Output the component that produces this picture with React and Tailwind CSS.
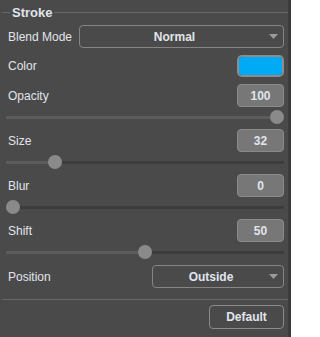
import React from "react";

const Arrow = () => (
    <svg width="9" height="5" viewBox="0 0 9 5" className="shrink-0 mr-[5px]">
        <path d="M0 0 H9 L4.5 5 Z" fill="#9a9a9a" />
    </svg>
);

const Dropdown = ({ value, width }) => (
    <div className={`flex items-center h-[23px] rounded-[4px] border border-[#858585] ${width}`}>
        <span className="flex-1 text-center font-bold text-[12px] leading-none">{value}</span>
        <Arrow />
    </div>
);

const ValueBox = ({ value }) => (
    <div className="flex items-center justify-center w-[47px] h-[23px] rounded-[4px] border border-[#8a8a8a] bg-[#777777] font-bold text-[12px] leading-none">
        {value}
    </div>
);

const Slider = ({ value, max }) => {
    const ratio = value / max;
    return (
        <div className="relative ml-[6px] w-[278px] h-[22px]">
            <div className="absolute inset-x-0 top-[9px] h-[3px] bg-[#3d3d3d]" />
            <div className="absolute left-0 top-[9px] h-[3px] bg-[#5c5c5c]" style={{ width: 7 + ratio * 264 }} />
            <div className="absolute top-[3px] w-[14px] h-[14px] rounded-full bg-[#8a8a8a]" style={{ left: ratio * 264 }} />
        </div>
    );
};

const Row = ({ label, children, className = "" }) => (
    <div className={`flex items-center justify-between pl-[8px] pr-[4px] h-[23px] ${className}`}>
        <span className="text-[12px] leading-none">{label}</span>
        {children}
    </div>
);

const sliders = [
    { label: "Size", value: 32, max: 200 },
    { label: "Blur", value: 0, max: 100 },
    { label: "Shift", value: 50, max: 100 },
];

export default function App() {
    return (
        <div className="w-[291px] h-[337px] bg-[#4a4a4a] border-r-[3px] border-[#3b3b3b] text-[#e0e5ec] font-['Liberation_Sans',Arial,sans-serif] flex flex-col">
            <div className="flex items-center h-[25px] pl-[2px]">
                <div className="w-[8px] h-px bg-[#686868]" />
                <span className="px-[2px] font-bold text-[13px] leading-none">Stroke</span>
                <div className="flex-1 h-px bg-[#686868]" />
            </div>

            <Row label="Blend Mode">
                <Dropdown value="Normal" width="w-[205px]" />
            </Row>

            <Row label="Color" className="mt-[7px] !h-[22px]">
                <div className="w-[47px] h-[22px] rounded-[5px] border-2 border-[#8c8c8c] p-0">
                    <div className="w-full h-full rounded-[3px] bg-[#00aaf5]" />
                </div>
            </Row>

            <Row label="Opacity" className="mt-[7px]">
                <ValueBox value={100} />
            </Row>
            <Slider value={100} max={100} />

            {sliders.map(s => (
                <div key={s.label}>
                    <Row label={s.label}>
                        <ValueBox value={s.value} />
                    </Row>
                    <Slider value={s.value} max={s.max} />
                </div>
            ))}

            <Row label="Position" className="mt-[1px]">
                <Dropdown value="Outside" width="w-[132px]" />
            </Row>

            <div className="mt-[11px] ml-[2px] h-px bg-[#686868]" />

            <div className="flex justify-end pr-[4px] mt-[5px]">
                <button className="w-[75px] h-[24px] rounded-[4px] border border-[#8a8a8a] font-bold text-[12px] leading-none">
                    Default
                </button>
            </div>
        </div>
    );
}
